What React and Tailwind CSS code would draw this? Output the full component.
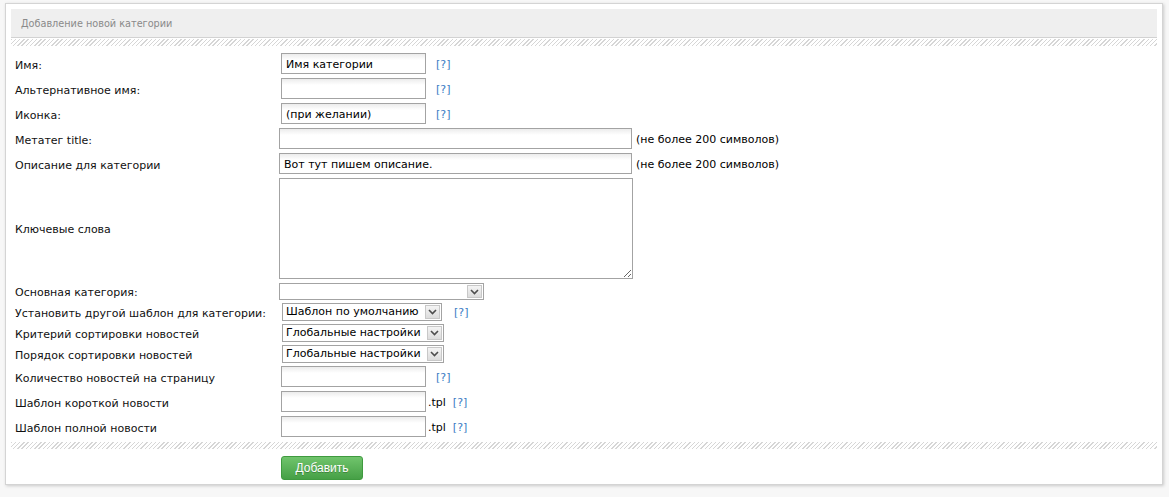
import React from "react";

const font = { fontFamily: '"DejaVu Sans", Verdana, sans-serif' };

function Help({ className = "" }) {
  return (
    <a href="#" className={`mt-[4px] text-[11px] text-[#3b7cc4] no-underline ${className}`}>
      [?]
    </a>
  );
}

function Note({ children, className = "" }) {
  return <span className={`mt-[4px] text-[11px] text-black ${className}`}>{children}</span>;
}

function TextBox({ width, value = "", className = "" }) {
  return (
    <input
      type="text"
      defaultValue={value}
      className={`h-[21px] border border-[#a3a3a3] bg-white bg-[linear-gradient(#ececec_0,#fff_6px)] px-[4px] pt-[2px] text-[11px] text-black outline-none ${className}`}
      style={{ width, ...font }}
    />
  );
}

function Chevron() {
  return (
    <svg width="9" height="6" viewBox="0 0 9 6" className="block">
      <path d="M1 1 L4.5 4.5 L8 1" fill="none" stroke="#4d4d4d" strokeWidth="1.6" />
    </svg>
  );
}

function DropDown({ width, value = "", height = 17, className = "" }) {
  return (
    <div
      className={`flex items-stretch border border-[#a3a3a3] bg-white ${className}`}
      style={{ width, height }}
    >
      <div className="flex flex-1 items-center overflow-hidden whitespace-nowrap pl-[3px] pt-[2px] text-[11px] text-black">
        {value}
      </div>
      <div className="m-px flex w-[15px] items-center justify-center border border-[#c8c8c8] bg-[linear-gradient(#f4f4f4,#dcdcdc)]">
        <Chevron />
      </div>
    </div>
  );
}

function Row({ label, h = 25, children }) {
  return (
    <div className="flex items-center" style={{ height: h }}>
      <div className="w-[264px] shrink-0 pl-[4px] pt-[5px] text-[11px] text-[#111]">{label}</div>
      <div className="flex items-center">{children}</div>
    </div>
  );
}

const stripe =
  "h-[7px] bg-[repeating-linear-gradient(135deg,#d6d6d6_0,#d6d6d6_1px,#ffffff_1px,#ffffff_3px)]";

export default function App() {
  return (
    <div className="min-h-[497px] w-[1169px] bg-[#f7f7f7] pl-[5px] pt-[3px]" style={font}>
      <div className="h-[482px] w-[1158px] border border-[#d4d4d4] bg-white p-[5px] shadow-[1px_1px_3px_rgba(0,0,0,0.18)]">
        <div className="flex h-[29px] items-center border-b border-[#d2d2d2] bg-[#efefef] pl-[10px] pt-[2px] text-[9.7px] text-[#8a8a8a]">
          Добавление новой категории
        </div>
        <div className={`mt-px ${stripe}`} />

        <div className="pt-[5px]">
          <Row label="Имя:">
            <TextBox width={145} value="Имя категории" className="ml-[6px]" />
            <Help className="ml-[10px]" />
          </Row>
          <Row label="Альтернативное имя:">
            <TextBox width={145} className="ml-[6px]" />
            <Help className="ml-[10px]" />
          </Row>
          <Row label="Иконка:">
            <TextBox width={145} value="(при желании)" className="ml-[6px]" />
            <Help className="ml-[10px]" />
          </Row>
          <Row label="Метатег title:">
            <TextBox width={353} className="ml-[4px]" />
            <Note className="ml-[4px]">(не более 200 символов)</Note>
          </Row>
          <Row label="Описание для категории">
            <TextBox width={353} value="Вот тут пишем описание." className="ml-[4px]" />
            <Note className="ml-[4px]">(не более 200 символов)</Note>
          </Row>
          <Row label="Ключевые слова" h={104}>
            <textarea
              className="ml-[4px] h-[101px] w-[354px] border border-[#a3a3a3] bg-white p-[3px] text-[11px] outline-none"
              style={font}
            />
          </Row>
          <Row label="Основная категория:" h={21}>
            <DropDown width={205} className="ml-[4px] mt-[2px]" />
          </Row>
          <Row label="Установить другой шаблон для категории:" h={21}>
            <DropDown width={160} height={18} value="Шаблон по умолчанию" className="ml-[7px]" />
            <Help className="ml-[12px]" />
          </Row>
          <Row label="Критерий сортировки новостей" h={21}>
            <DropDown width={162} height={18} value="Глобальные настройки" className="ml-[7px]" />
          </Row>
          <Row label="Порядок сортировки новостей" h={21}>
            <DropDown width={162} height={18} value="Глобальные настройки" className="ml-[7px]" />
          </Row>
          <Row label="Количество новостей на страницу">
            <TextBox width={145} className="ml-[6px]" />
            <Help className="ml-[10px]" />
          </Row>
          <Row label="Шаблон короткой новости">
            <TextBox width={145} className="ml-[6px]" />
            <Note className="ml-[2px]">.tpl</Note>
            <Help className="ml-[7px]" />
          </Row>
          <Row label="Шаблон полной новости">
            <TextBox width={145} className="ml-[6px]" />
            <Note className="ml-[2px]">.tpl</Note>
            <Help className="ml-[7px]" />
          </Row>
        </div>

        <div className={`mt-[3px] ${stripe}`} />
        <div className="pl-[270px] pt-[6px]">
          <button
            type="button"
            className="h-[24px] w-[82px] rounded-[3px] border border-[#3f9a3f] bg-[linear-gradient(#70c46c,#46a046)] text-[12px] text-white [text-shadow:0_1px_0_rgba(0,0,0,0.25)]"
            style={{ fontFamily: '"Liberation Sans", Arial, sans-serif' }}
          >
            Добавить
          </button>
        </div>
      </div>
    </div>
  );
}
